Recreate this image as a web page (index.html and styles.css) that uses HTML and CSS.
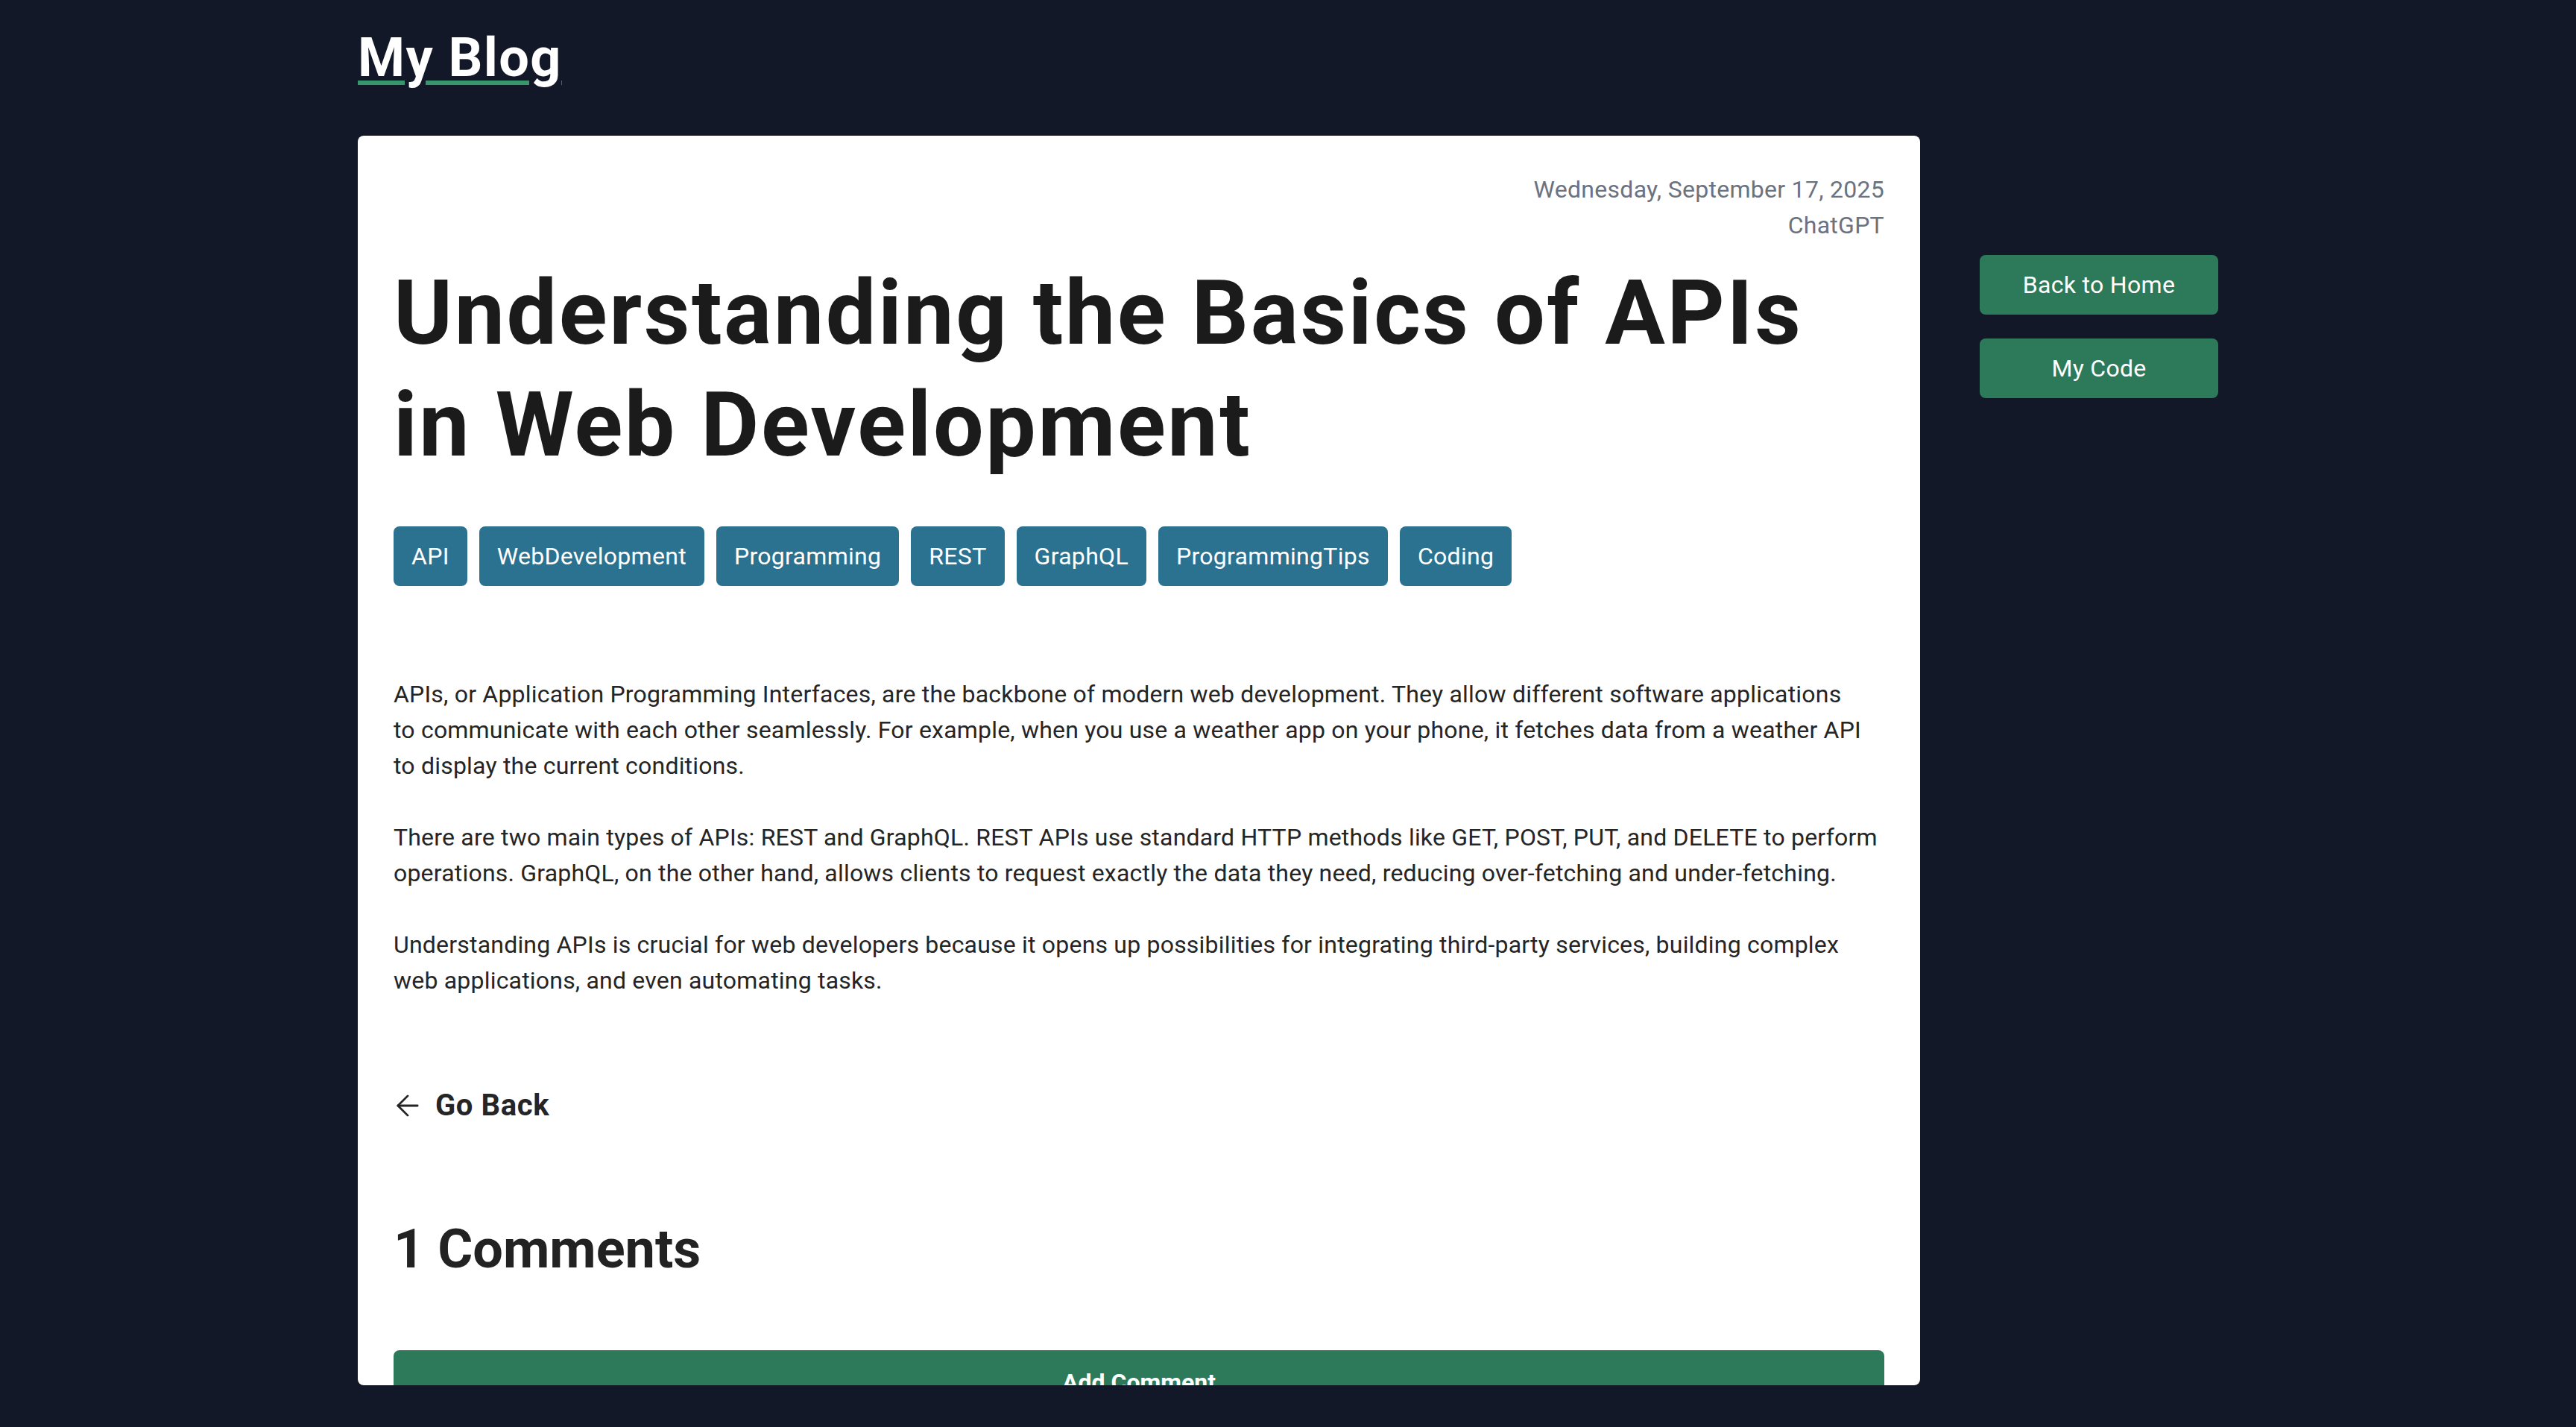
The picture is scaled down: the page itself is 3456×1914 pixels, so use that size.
FILE: index.html
```html
<!DOCTYPE html>
<html lang="en">
<head>
<meta charset="utf-8">
<title>Understanding the Basics of APIs in Web Development - My Blog</title>
<link rel="stylesheet" href="styles.css">
</head>
<body>
<div class="page">
  <header class="site-header">
    <a class="brand" href="#">My Blog</a>
  </header>
  <div class="layout">
    <main class="card">
      <div class="meta">
        <div>Wednesday, September 17, 2025</div>
        <div>ChatGPT</div>
      </div>
      <h1 class="title">Understanding the Basics of APIs in Web Development</h1>
      <div class="tags">
        <span class="tag">API</span>
        <span class="tag">WebDevelopment</span>
        <span class="tag">Programming</span>
        <span class="tag">REST</span>
        <span class="tag">GraphQL</span>
        <span class="tag">ProgrammingTips</span>
        <span class="tag">Coding</span>
      </div>
      <div class="content">
        <p>APIs, or Application Programming Interfaces, are the backbone of modern web development. They allow different software applications<br>to communicate with each other seamlessly. For example, when you use a weather app on your phone, it fetches data from a weather API<br>to display the current conditions.</p>
        <p>There are two main types of APIs: REST and GraphQL. REST APIs use standard HTTP methods like GET, POST, PUT, and DELETE to perform<br>operations. GraphQL, on the other hand, allows clients to request exactly the data they need, reducing over-fetching and under-fetching.</p>
        <p>Understanding APIs is crucial for web developers because it opens up possibilities for integrating third-party services, building complex<br>web applications, and even automating tasks.</p>
      </div>
      <a class="go-back" href="#">
        <svg class="go-back-icon" viewBox="4 4 16 16" width="30" height="30" fill="none" stroke="currentColor" stroke-width="1.5" stroke-linecap="round" stroke-linejoin="round"><path d="M19 12H5"/><path d="M12 19l-7-7 7-7"/></svg>
        <span>Go Back</span>
      </a>
      <h2 class="comments-title">1 Comments</h2>
      <button class="add-comment" type="button">Add Comment</button>
    </main>
    <aside class="sidebar">
      <a class="side-btn" href="#">Back to Home</a>
      <a class="side-btn" href="#">My Code</a>
    </aside>
  </div>
</div>
</body>
</html>
```
FILE: styles.css
```css
html, body {
  margin: 0;
  padding: 0;
  height: 100%;
}
body {
  background: #121827;
  font-family: Roboto, "Noto Sans", sans-serif;
  color: #222222;
  overflow: hidden;
}
.page {
  width: 2496px;
  margin: 0 auto;
}
.site-header {
  padding-top: 38px;
  height: 80px;
  margin-bottom: 64px;
}
.brand {
  display: inline-block;
  font-size: 72px;
  line-height: 80px;
  font-weight: 700;
  letter-spacing: 1.4px;
  color: #ffffff;
  text-decoration: underline;
  text-decoration-color: #38976a;
  text-decoration-thickness: 6px;
  text-underline-offset: 6px;
}
.layout {
  display: flex;
  gap: 80px;
  align-items: flex-start;
}
.card {
  box-sizing: border-box;
  width: 2096px;
  height: 1676px;
  overflow: hidden;
  background: #ffffff;
  border-radius: 8px;
  padding: 48px;
  display: flex;
  flex-direction: column;
}
.meta {
  flex: none;
  text-align: right;
  font-size: 32px;
  line-height: 48px;
  letter-spacing: 0.28px;
  color: #6b7280;
}
.title {
  flex: none;
  margin: 19px 0 0;
  font-size: 120px;
  line-height: 150px;
  font-weight: 700;
  letter-spacing: 2.6px;
  color: #1b1b1b;
}
.tags {
  flex: none;
  display: flex;
  flex-wrap: wrap;
  gap: 16px;
  margin-top: 61px;
}
.tag {
  background: #2b7291;
  color: #ffffff;
  font-size: 32px;
  line-height: 48px;
  letter-spacing: 0.3px;
  padding: 16px 24px;
  border-radius: 8px;
}
.content {
  flex: none;
  margin-top: 121px;
  font-size: 32px;
  line-height: 48px;
  letter-spacing: 0.2px;
  color: #252525;
}
.content p {
  margin: 0 0 48px;
  white-space: nowrap;
}
.content p:last-child {
  margin-bottom: 0;
}
.go-back {
  flex: none;
  align-self: flex-start;
  margin-top: 114px;
  display: flex;
  align-items: center;
  gap: 22px;
  font-size: 40px;
  line-height: 60px;
  font-weight: 700;
  letter-spacing: 0.6px;
  color: #252525;
  text-decoration: none;
}
.go-back-icon {
  margin-left: 4px;
  flex: none;
}
.comments-title {
  flex: none;
  margin: 118px 0 0;
  font-size: 72px;
  line-height: 90px;
  font-weight: 700;
  color: #222222;
}
.add-comment {
  flex: none;
  margin-top: 90px;
  width: 100%;
  border: none;
  border-radius: 8px;
  background: #2d7a5a;
  color: #ffffff;
  font-family: Roboto, "Noto Sans", sans-serif;
  font-size: 32px;
  line-height: 48px;
  font-weight: 700;
  padding: 19px 0 16px;
}
.sidebar {
  width: 320px;
  margin-top: 160px;
  display: flex;
  flex-direction: column;
  gap: 32px;
}
.side-btn {
  display: block;
  height: 80px;
  line-height: 80px;
  text-align: center;
  background: #2d7a5a;
  color: #ffffff;
  font-size: 32px;
  letter-spacing: 0.3px;
  text-decoration: none;
  border-radius: 8px;
}
```
